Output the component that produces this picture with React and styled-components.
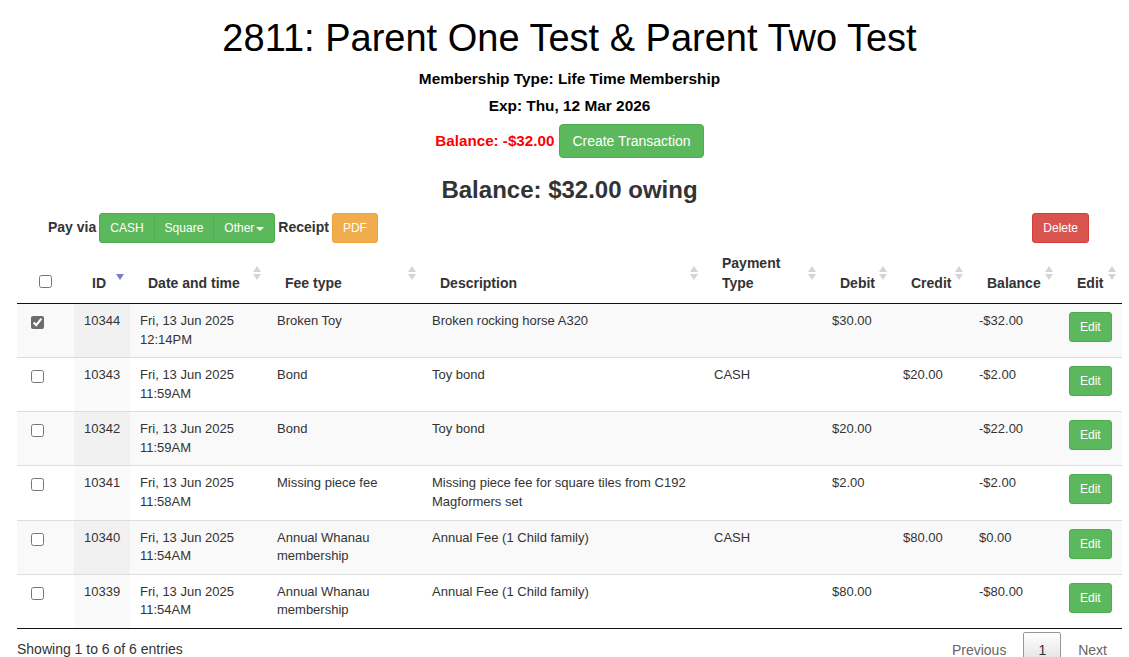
import React from "react";
import styled, { createGlobalStyle, css } from "styled-components";

const GlobalStyle = createGlobalStyle`
  html, body { margin: 0; padding: 0; background: #fff; }
  body {
    font-family: "Liberation Sans", Arial, Helvetica, sans-serif;
    font-size: 14px;
    line-height: 1.42857;
    color: #333;
  }
  * { box-sizing: border-box; }
`;

const Page = styled.div`
  padding: 0 7px 0 17px;
`;

const Header = styled.header`
  display: flex;
  flex-direction: column;
  align-items: center;
  text-align: center;
`;

const Title = styled.h1`
  margin: 18px 0 6px;
  font-size: 38px;
  font-weight: 400;
  line-height: 1.07;
  color: #000;
`;

const InfoLine = styled.div`
  font-size: 15.4px;
  font-weight: 700;
  line-height: 27px;
  color: #000;
`;

const BalanceRow = styled.div`
  display: flex;
  align-items: center;
  gap: 5px;
  margin-top: 5px;
`;

const RedBalance = styled.span`
  font-size: 15.2px;
  font-weight: 700;
  color: #f00;
`;

const BigBalance = styled.h3`
  margin: 19px 0 0;
  font-size: 24px;
  font-weight: 700;
  line-height: 1.1;
  color: #333;
`;

const variants = {
  success: css`background: #5cb85c; border-color: #4cae4c;`,
  warning: css`background: #f0ad4e; border-color: #eea236;`,
  danger: css`background: #d9534f; border-color: #d43f3a;`,
};

const Button = styled.button`
  font-family: inherit;
  color: #fff;
  border: 1px solid transparent;
  cursor: pointer;
  white-space: nowrap;
  ${(p) => variants[p.$variant || "success"]}
  ${(p) =>
    p.$size === "lg"
      ? css`
          font-size: 14px;
          line-height: 20px;
          padding: 6px 12px;
          border-radius: 4px;
        `
      : css`
          font-size: 12px;
          line-height: 18px;
          padding: 5px 10px;
          border-radius: 3px;
        `}
`;

const Toolbar = styled.div`
  display: flex;
  align-items: center;
  margin-top: 10px;
  padding: 0 33px 0 31px;
  height: 30px;
`;

const ToolGroup = styled.div`
  display: flex;
  align-items: center;
  gap: 3px;
`;

const Label = styled.span`
  font-size: 14px;
  font-weight: 700;
  color: #333;
`;

const BtnGroup = styled.div`
  display: inline-flex;
  & > button {
    border-radius: 0;
  }
  & > button + button {
    margin-left: -1px;
  }
  & > button:first-child {
    border-radius: 3px 0 0 3px;
  }
  & > button:last-child {
    border-radius: 0 3px 3px 0;
  }
`;

const Caret = styled.span`
  display: inline-block;
  width: 0;
  height: 0;
  margin-left: 2px;
  vertical-align: middle;
  border-top: 4px solid #fff;
  border-left: 4px solid transparent;
  border-right: 4px solid transparent;
`;

const Spacer = styled.div`
  margin-left: auto;
`;

const Table = styled.table`
  width: 100%;
  table-layout: fixed;
  border-collapse: separate;
  border-spacing: 0;
  border-bottom: 1px solid #111;
`;

const Th = styled.th`
  position: relative;
  padding: 10px 18px;
  text-align: left;
  vertical-align: bottom;
  font-size: 14px;
  font-weight: 700;
  line-height: 20px;
  color: #333;
  border-bottom: 1px solid #111;
`;

const SortIcon = styled.span`
  position: absolute;
  right: 6px;
  top: calc(50% - 7px);
  width: 8px;
  height: 14px;
  &::before,
  &::after {
    content: "";
    position: absolute;
    left: 0;
    width: 0;
    height: 0;
    border-left: 4px solid transparent;
    border-right: 4px solid transparent;
  }
  &::before {
    top: 0;
    border-bottom: 6px solid ${(p) => (p.$dir === "desc" ? "transparent" : "#d4d4d4")};
  }
  &::after {
    top: 8px;
    border-top: 6px solid ${(p) => (p.$dir === "desc" ? "#7b7bd8" : "#d4d4d4")};
  }
`;

const Tr = styled.tr`
  background: ${(p) => (p.$odd ? "#f9f9f9" : "#fff")};
`;

const Td = styled.td`
  padding: 8px 10px;
  font-size: 13px;
  line-height: 1.42857;
  vertical-align: top;
  color: #333;
  border-top: ${(p) => (p.$first ? "none" : "1px solid #ddd")};
  ${(p) =>
    p.$sorted &&
    css`
      background: ${p.$odd ? "#f1f1f1" : "#fafafa"};
    `}
`;

const Check = styled.input.attrs({ type: "checkbox" })`
  margin: 4px 0 0 4px;
  width: 13px;
  height: 13px;
  accent-color: #6b6b6b;
  display: ${(p) => (p.$block ? "block" : "inline-block")};
`;

const Footer = styled.div`
  display: flex;
  justify-content: space-between;
  align-items: flex-start;
`;

const Info = styled.div`
  padding-top: 10.5px;
  font-size: 14px;
  line-height: 20px;
  color: #333;
`;

const Pager = styled.div`
  display: flex;
  padding-top: 3.5px;
`;

const PageBtn = styled.span`
  display: inline-block;
  padding: 7px 14px;
  margin-left: 2px;
  font-size: 14px;
  line-height: 20px;
  border: 1px solid transparent;
  border-radius: 2px;
  color: #666;
  ${(p) =>
    p.$current &&
    css`
      color: #333;
      border-color: #979797;
      background: linear-gradient(to bottom, #fff 0%, #dcdcdc 100%);
    `}
`;

const columns = [
  { key: "check", w: 57 },
  { key: "id", label: "ID", w: 56, sort: "desc" },
  { key: "date", label: "Date and time", w: 137, sort: "both" },
  { key: "fee", label: "Fee type", w: 155, sort: "both" },
  { key: "desc", label: "Description", w: 282, sort: "both" },
  { key: "pay", label: "Payment Type", w: 118, sort: "both" },
  { key: "debit", label: "Debit", w: 71, sort: "both" },
  { key: "credit", label: "Credit", w: 76, sort: "both" },
  { key: "bal", label: "Balance", w: 90, sort: "both" },
  { key: "edit", label: "Edit", w: 63, sort: "both" },
];

const rows = [
  { id: "10344", date: "Fri, 13 Jun 2025 12:14PM", fee: "Broken Toy", desc: "Broken rocking horse A320", pay: "", debit: "$30.00", credit: "", bal: "-$32.00", checked: true },
  { id: "10343", date: "Fri, 13 Jun 2025 11:59AM", fee: "Bond", desc: "Toy bond", pay: "CASH", debit: "", credit: "$20.00", bal: "-$2.00" },
  { id: "10342", date: "Fri, 13 Jun 2025 11:59AM", fee: "Bond", desc: "Toy bond", pay: "", debit: "$20.00", credit: "", bal: "-$22.00" },
  { id: "10341", date: "Fri, 13 Jun 2025 11:58AM", fee: "Missing piece fee", desc: "Missing piece fee for square tiles from C192 Magformers set", pay: "", debit: "$2.00", credit: "", bal: "-$2.00" },
  { id: "10340", date: "Fri, 13 Jun 2025 11:54AM", fee: "Annual Whanau membership", desc: "Annual Fee (1 Child family)", pay: "CASH", debit: "", credit: "$80.00", bal: "$0.00" },
  { id: "10339", date: "Fri, 13 Jun 2025 11:54AM", fee: "Annual Whanau membership", desc: "Annual Fee (1 Child family)", pay: "", debit: "$80.00", credit: "", bal: "-$80.00" },
];

export default function App() {
  return (
    <>
      <GlobalStyle />
      <Page>
        <Header>
          <Title>2811: Parent One Test &amp; Parent Two Test</Title>
          <InfoLine>Membership Type: Life Time Membership</InfoLine>
          <InfoLine>Exp: Thu, 12 Mar 2026</InfoLine>
          <BalanceRow>
            <RedBalance>Balance: -$32.00</RedBalance>
            <Button $size="lg">Create Transaction</Button>
          </BalanceRow>
          <BigBalance>Balance: $32.00 owing</BigBalance>
        </Header>

        <Toolbar>
          <ToolGroup>
            <Label>Pay via</Label>
            <BtnGroup>
              <Button>CASH</Button>
              <Button>Square</Button>
              <Button>
                Other<Caret />
              </Button>
            </BtnGroup>
            <Label>Receipt</Label>
            <Button $variant="warning">PDF</Button>
          </ToolGroup>
          <Spacer>
            <Button $variant="danger">Delete</Button>
          </Spacer>
        </Toolbar>

        <Table>
          <colgroup>
            {columns.map((c) => (
              <col key={c.key} style={{ width: c.w }} />
            ))}
          </colgroup>
          <thead>
            <tr>
              {columns.map((c) => (
                <Th key={c.key}>
                  {c.key === "check" ? <Check /> : c.label}
                  {c.sort && <SortIcon $dir={c.sort} />}
                </Th>
              ))}
            </tr>
          </thead>
          <tbody>
            {rows.map((r, i) => {
              const odd = i % 2 === 0;
              const first = i === 0;
              return (
                <Tr key={r.id} $odd={odd}>
                  <Td $first={first}>
                    <Check $block defaultChecked={!!r.checked} />
                  </Td>
                  <Td $first={first} $sorted $odd={odd}>{r.id}</Td>
                  <Td $first={first}>{r.date}</Td>
                  <Td $first={first}>{r.fee}</Td>
                  <Td $first={first}>{r.desc}</Td>
                  <Td $first={first}>{r.pay}</Td>
                  <Td $first={first}>{r.debit}</Td>
                  <Td $first={first}>{r.credit}</Td>
                  <Td $first={first}>{r.bal}</Td>
                  <Td $first={first}>
                    <Button>Edit</Button>
                  </Td>
                </Tr>
              );
            })}
          </tbody>
        </Table>

        <Footer>
          <Info>Showing 1 to 6 of 6 entries</Info>
          <Pager>
            <PageBtn>Previous</PageBtn>
            <PageBtn $current>1</PageBtn>
            <PageBtn>Next</PageBtn>
          </Pager>
        </Footer>
      </Page>
    </>
  );
}
